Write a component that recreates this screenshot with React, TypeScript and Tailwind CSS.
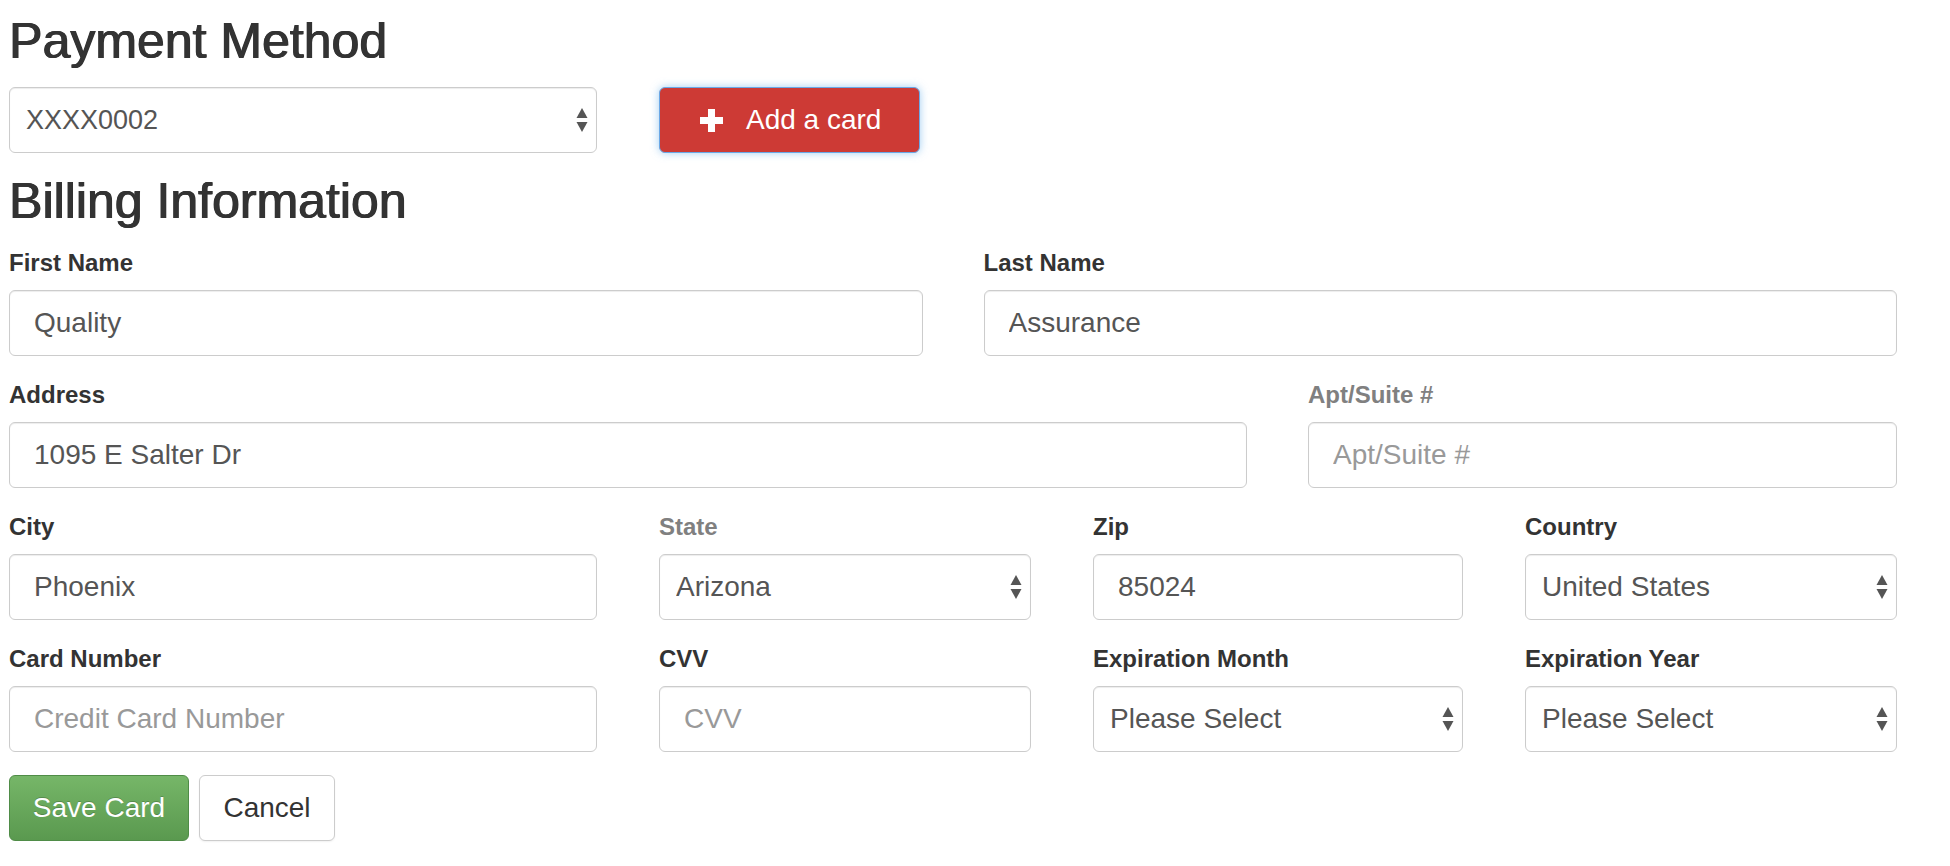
import React from "react";

function Arrows() {
  return (
    <svg width="12" height="26" viewBox="0 0 12 26" className="pointer-events-none absolute right-[9px] top-1/2 -translate-y-1/2">
      <polygon points="6,1 11.5,11 0.5,11" fill="#555" />
      <polygon points="0.5,15 11.5,15 6,25" fill="#555" />
    </svg>
  );
}

function Select({ value, textSize = "text-[28px]" }: { value: string; textSize?: string }) {
  return (
    <div className="relative">
      <select
        defaultValue={value}
        className={`appearance-none w-full h-[66px] bg-white border border-[#ccc] rounded-[6px] pl-[16px] pr-[30px] ${textSize} text-[#555] shadow-[inset_0_1px_1px_rgba(0,0,0,0.075)] outline-none`}
      >
        <option>{value}</option>
      </select>
      <Arrows />
    </div>
  );
}

function Input({ value, placeholder }: { value?: string; placeholder?: string }) {
  return (
    <input
      defaultValue={value}
      placeholder={placeholder}
      className="w-full h-[66px] bg-white border border-[#ccc] rounded-[6px] px-[24px] text-[28px] text-[#555] placeholder:text-[#999] shadow-[inset_0_1px_1px_rgba(0,0,0,0.075)] outline-none"
    />
  );
}

function Field({
  label,
  muted,
  children,
}: {
  label: string;
  muted?: boolean;
  children: React.ReactNode;
}) {
  return (
    <div className="mb-[24px]">
      <label className={`block text-[24px] leading-[30px] font-bold mb-[12px] ${muted ? "text-[#808080]" : "text-[#333]"}`}>
        {label}
      </label>
      {children}
    </div>
  );
}

export default function App() {
  return (
    <div className="min-h-[866px] bg-white font-['Liberation_Sans',Arial,sans-serif] text-[#333] pl-[9px] pt-[14px]">
      <div className="w-[1888px]">
        {/* Payment method */}
        <h2 className="text-[50px] leading-[55px] [text-shadow:0.8px_0_0_#333,-0.4px_0_0_#333] mb-[18px]">Payment Method</h2>
        <div className="flex gap-[62px]">
          <div className="w-[588px]">
            <Select value="XXXX0002" textSize="text-[27px]" />
          </div>
          <button
            type="button"
            className="w-[261px] h-[66px] flex items-center pl-[40px] gap-[23px] bg-[#cd3a35] text-white text-[28px] rounded-[6px] border border-[#6aa8e6] shadow-[0_0_9px_rgba(102,175,233,0.6)]"
          >
            <svg width="23" height="23" viewBox="0 0 23 23">
              <rect x="8" y="0" width="7" height="23" fill="#fff" />
              <rect x="0" y="8" width="23" height="7" fill="#fff" />
            </svg>
            Add a card
          </button>
        </div>

        {/* Billing */}
        <h2 className="text-[50px] leading-[55px] [text-shadow:0.8px_0_0_#333,-0.4px_0_0_#333] mt-[21px] mb-[19px]">Billing Information</h2>

        <div className="grid grid-cols-2 gap-x-[61px]">
          <Field label="First Name">
            <Input value="Quality" />
          </Field>
          <Field label="Last Name">
            <Input value="Assurance" />
          </Field>
        </div>

        <div className="grid grid-cols-[1238px_1fr] gap-x-[61px]">
          <Field label="Address">
            <Input value="1095 E Salter Dr" />
          </Field>
          <Field label="Apt/Suite #" muted>
            <Input placeholder="Apt/Suite #" />
          </Field>
        </div>

        <div className="grid grid-cols-[588px_372px_370px_372px] gap-x-[62px]">
          <Field label="City">
            <Input value="Phoenix" />
          </Field>
          <Field label="State" muted>
            <Select value="Arizona" />
          </Field>
          <Field label="Zip">
            <Input value="85024" />
          </Field>
          <Field label="Country">
            <Select value="United States" />
          </Field>
        </div>

        <div className="grid grid-cols-[588px_372px_370px_372px] gap-x-[62px]">
          <Field label="Card Number">
            <Input placeholder="Credit Card Number" />
          </Field>
          <Field label="CVV">
            <Input placeholder="CVV" />
          </Field>
          <Field label="Expiration Month">
            <Select value="Please Select" />
          </Field>
          <Field label="Expiration Year">
            <Select value="Please Select" />
          </Field>
        </div>

        <div className="flex gap-[10px] -mt-[1px]">
          <button
            type="button"
            className="w-[180px] h-[66px] rounded-[6px] border border-[#4f8c47] bg-[linear-gradient(to_bottom,#76b668,#5a994f)] text-white text-[28px] [text-shadow:0_-1px_0_rgba(0,0,0,0.2)]"
          >
            Save Card
          </button>
          <button
            type="button"
            className="w-[136px] h-[66px] rounded-[6px] border border-[#ccc] bg-white text-[#333] text-[28px] shadow-[0_1px_2px_rgba(0,0,0,0.06)]"
          >
            Cancel
          </button>
        </div>
      </div>
    </div>
  );
}
